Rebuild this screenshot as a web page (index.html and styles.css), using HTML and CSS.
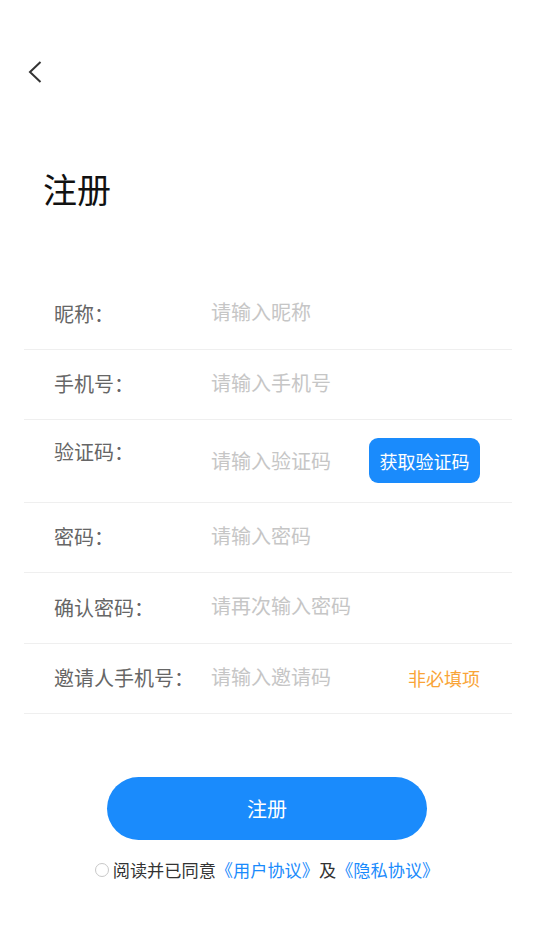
FILE: index.html
```html
<!DOCTYPE html>
<html lang="zh-CN">
<head>
  <meta charset="UTF-8" />
  <title>注册</title>
  <link rel="stylesheet" href="styles.css">
</head>
<body>
  <div class="nav">
    <svg class="back" width="14" height="22" viewBox="0 0 14 22">
      <path d="M12.5 1 L2 11 L12.5 21" fill="none" stroke="#333" stroke-width="2" />
    </svg>
  </div>

  <h1 class="title">注册</h1>

  <div class="form">
    <div class="row">
      <span class="label">昵称：</span>
      <input class="field" type="text" placeholder="请输入昵称" />
    </div>
    <div class="row">
      <span class="label">手机号：</span>
      <input class="field" type="text" placeholder="请输入手机号" />
    </div>
    <div class="row row-code">
      <span class="label">验证码：</span>
      <input class="field" type="text" placeholder="请输入验证码" />
      <button class="code-btn">获取验证码</button>
    </div>
    <div class="row">
      <span class="label">密码：</span>
      <input class="field" type="password" placeholder="请输入密码" />
    </div>
    <div class="row">
      <span class="label">确认密码：</span>
      <input class="field" type="password" placeholder="请再次输入密码" />
    </div>
    <div class="row">
      <span class="label">邀请人手机号：</span>
      <input class="field" type="text" placeholder="请输入邀请码" />
      <span class="optional">非必填项</span>
    </div>
  </div>

  <button class="submit">注册</button>

  <div class="agree">
    <span class="radio"></span>阅读并已同意<a href="#">《用户协议》</a>及<a href="#">《隐私协议》</a>
  </div>
</body>
</html>
```

FILE: styles.css
```css
body {
  margin: 0;
  background: #fff;
  font-family: "Noto Sans CJK SC", "Noto Sans", sans-serif;
  color: #333;
}
.nav {
  padding: 61px 0 0 28px;
  height: 22px;
}
.back {
  display: block;
}
.title {
  margin: 89px 0 0 43px;
  font-size: 34px;
  line-height: 34px;
  font-weight: normal;
  color: #111;
}
.form {
  margin: 73px 22px 0 24px;
}
.row {
  display: flex;
  align-items: center;
  height: 69.5px;
  padding: 0 32px 0 30px;
  border-bottom: 1px solid #efefef;
}
.row-code {
  height: 81.7px;
}
.row-code .label {
  align-self: flex-start;
}
.row-code .field {
  padding: 0;
}
.label {
  width: 157px;
  flex-shrink: 0;
  font-size: 20px;
  line-height: 64px;
  color: #666;
}
.field {
  flex: 1;
  min-width: 0;
  border: none;
  outline: none;
  padding: 0 0 4px;
  font-family: inherit;
  font-size: 20px;
  color: #333;
  background: transparent;
}
.field::placeholder {
  color: #c6c6c6;
}
.code-btn {
  width: 111px;
  height: 45px;
  border: none;
  border-radius: 9px;
  background: #1a8bfc;
  color: #fff;
  font-family: inherit;
  font-size: 18px;
  padding: 0;
}
.optional {
  font-size: 18px;
  color: #f9a437;
}
.submit {
  display: block;
  width: 320px;
  height: 63px;
  margin: 63px auto 0;
  border: none;
  border-radius: 32px;
  background: #1a8bfc;
  color: #fff;
  font-family: inherit;
  font-size: 20px;
}
.agree {
  display: flex;
  align-items: center;
  justify-content: center;
  margin-top: 20px;
  font-size: 17.2px;
  line-height: 20px;
  color: #333;
}
.agree a {
  color: #1a8bfc;
  text-decoration: none;
}
.radio {
  width: 12px;
  height: 12px;
  border: 1px solid #c8c8c8;
  border-radius: 50%;
  margin-right: 4px;
}
```
